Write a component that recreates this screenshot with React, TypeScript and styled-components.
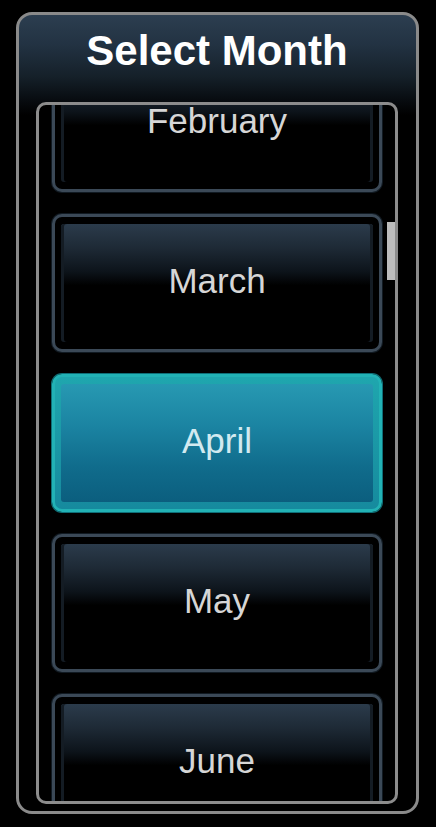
import React, { useLayoutEffect, useRef, useState } from "react";
import styled, { createGlobalStyle, css } from "styled-components";

const GlobalStyle = createGlobalStyle`
  html, body {
    margin: 0;
    padding: 0;
    background: #000;
  }
  body {
    font-family: "Liberation Sans", Arial, sans-serif;
  }
`;

const Page = styled.div`
  width: 436px;
  height: 827px;
  background: #000;
  padding: 12px 0 0 16px;
  box-sizing: border-box;
`;

const Frame = styled.div`
  width: 403px;
  height: 802px;
  box-sizing: border-box;
  border: 3px solid #8a8a8a;
  border-radius: 16px;
  background: linear-gradient(
    to bottom,
    #2c3e50 0px,
    #223242 30px,
    #152029 62px,
    #070b0f 86px,
    #000 100px
  );
  display: flex;
  flex-direction: column;
  padding: 0 18px 7px 17px;
`;

const Title = styled.h1`
  margin: 0;
  padding-top: 12px;
  height: 87px;
  box-sizing: border-box;
  font-family: "Liberation Sans", Arial, sans-serif;
  font-weight: bold;
  font-size: 42px;
  line-height: 48px;
  color: #fff;
  text-align: center;
`;

const ListBox = styled.div`
  position: relative;
  flex: 1;
  min-height: 0;
  border: 3px solid #8c8c8c;
  border-radius: 10px;
  background: #000;
  overflow: hidden;
`;

const Scroller = styled.div`
  height: 100%;
  overflow-y: auto;
  box-sizing: border-box;
  scrollbar-width: none;
  &::-webkit-scrollbar {
    display: none;
  }
`;

const List = styled.div`
  display: flex;
  flex-direction: column;
  gap: 22px;
  padding: 14px 13px;
`;

const Thumb = styled.div`
  position: absolute;
  right: 0;
  width: 8px;
  height: 58px;
  background: #bdbdbd;
`;

const Item = styled.button<{ $selected: boolean }>`
  position: relative;
  flex: none;
  height: 138px;
  width: 100%;
  box-sizing: border-box;
  border-radius: 10px;
  padding: 0 0 6px 0;
  cursor: pointer;
  font-family: "Liberation Sans", Arial, sans-serif;
  font-size: 35px;
  display: flex;
  align-items: center;
  justify-content: center;

  ${({ $selected }) =>
    $selected
      ? css`
          border: 3px solid #22b2b5;
          background: linear-gradient(to bottom, #1fa6ae, #168a9e);
          color: #d2eaf0;
          box-shadow: 0 0 0 1px #0f6f78;
        `
      : css`
          border: 3px solid #3b4957;
          background: #000;
          color: #d6d6d6;
          box-shadow: 0 0 0 1px #111a22;
        `}
`;

const Panel = styled.span<{ $selected: boolean }>`
  position: absolute;
  inset: 7px 6px 7px 6px;
  border-radius: 3px;
  ${({ $selected }) =>
    $selected
      ? css`
          background: linear-gradient(
            to bottom,
            #2799b2 0%,
            #1b84a2 35%,
            #106c8c 70%,
            #0b5e7e 100%
          );
        `
      : css`
          background: linear-gradient(
            to bottom,
            #2b3b4b 0%,
            #1e2a36 20%,
            #0d141b 40%,
            #000 52%,
            #000 100%
          );
          box-shadow: inset 3px 0 0 #141c24, inset -3px 0 0 #141c24;
        `}
`;

const Label = styled.span`
  position: relative;
  line-height: 1;
`;

const MONTHS = [
  "January",
  "February",
  "March",
  "April",
  "May",
  "June",
  "July",
  "August",
  "September",
  "October",
  "November",
  "December",
];

export default function App() {
  const [selected, setSelected] = useState("April");
  const [thumbTop, setThumbTop] = useState(117);
  const ref = useRef<HTMLDivElement>(null);

  const updateThumb = () => {
    const el = ref.current;
    if (!el) return;
    const max = el.scrollHeight - el.clientHeight;
    const ratio = max > 0 ? el.scrollTop / max : 0;
    setThumbTop(ratio * (el.clientHeight - 58));
  };

  useLayoutEffect(() => {
    if (ref.current) {
      ref.current.scrollTop = 225;
      updateThumb();
    }
  }, []);

  return (
    <>
      <GlobalStyle />
      <Page>
        <Frame>
          <Title>Select Month</Title>
          <ListBox>
            <Scroller ref={ref} onScroll={updateThumb}>
              <List>
                {MONTHS.map((m) => (
                  <Item
                    key={m}
                    $selected={m === selected}
                    onClick={() => setSelected(m)}
                  >
                    <Panel $selected={m === selected} />
                    <Label>{m}</Label>
                  </Item>
                ))}
              </List>
            </Scroller>
            <Thumb style={{ top: thumbTop }} />
          </ListBox>
        </Frame>
      </Page>
    </>
  );
}
